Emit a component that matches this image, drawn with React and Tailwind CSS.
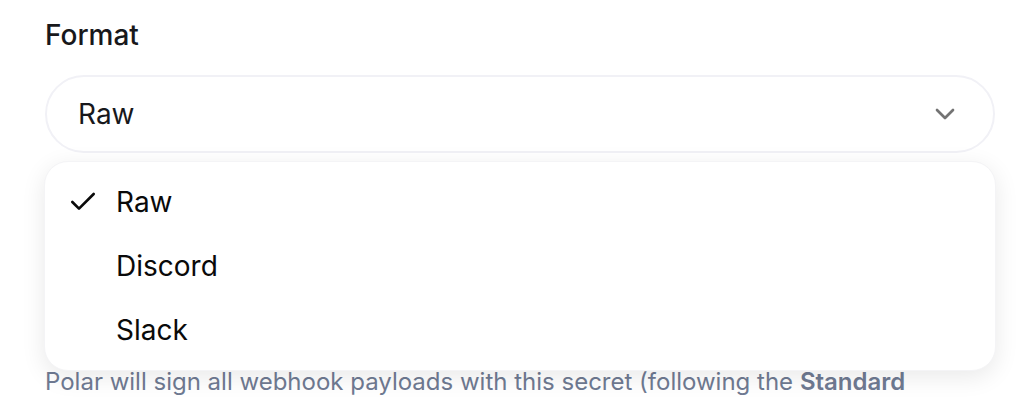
import React from "react";

function Chevron() {
  return (
    <svg width="32" height="32" viewBox="0 0 24 24" fill="none" stroke="#737373" strokeWidth="2" strokeLinecap="round" strokeLinejoin="round">
      <path d="m6 9 6 6 6-6" />
    </svg>
  );
}

function Check() {
  return (
    <svg width="32" height="32" viewBox="0 0 24 24" fill="none" stroke="#0a0a0a" strokeWidth="2" strokeLinecap="round" strokeLinejoin="round">
      <path d="M20 6 9 17l-5-5" />
    </svg>
  );
}

export default function App() {
  const items = [
    { label: "Raw", selected: true },
    { label: "Discord" },
    { label: "Slack" },
  ];
  return (
    <div className="relative w-[1034px] h-[402px] overflow-hidden bg-white" style={{ fontFamily: "Inter, 'Noto Sans', sans-serif" }}>
      <div className="pl-[45px] pt-[15px] pr-[39px]">
        <div className="text-[28px] leading-[40px] font-medium text-[#18181b]">Format</div>
        <div className="mt-[20px] h-[78px] rounded-full border-2 border-[#f1f1f6] flex items-center justify-between pl-[31px] pr-[32px]">
          <span className="text-[28px] text-[#18181b]">Raw</span>
          <Chevron />
        </div>
        <p className="mt-[211px] text-[24px] leading-[36px] text-[#6f7a92]">
          Polar will sign all webhook payloads with this secret (following the <span className="font-semibold">Standard</span>
        </p>
      </div>
      <div className="absolute left-[44px] right-[38px] top-[161px] rounded-[24px] bg-white border border-[#f4f4f6] shadow-[0_6px_24px_rgba(0,0,0,0.09)] py-[8px]">
        {items.map((it) => (
          <div key={it.label} className="h-[64px] flex items-center pl-[22px] gap-[17px]">
            <span className="w-[32px] h-[32px] flex items-center justify-center">{it.selected ? <Check /> : null}</span>
            <span className="text-[28px] text-[#0a0a0a]">{it.label}</span>
          </div>
        ))}
      </div>
    </div>
  );
}
